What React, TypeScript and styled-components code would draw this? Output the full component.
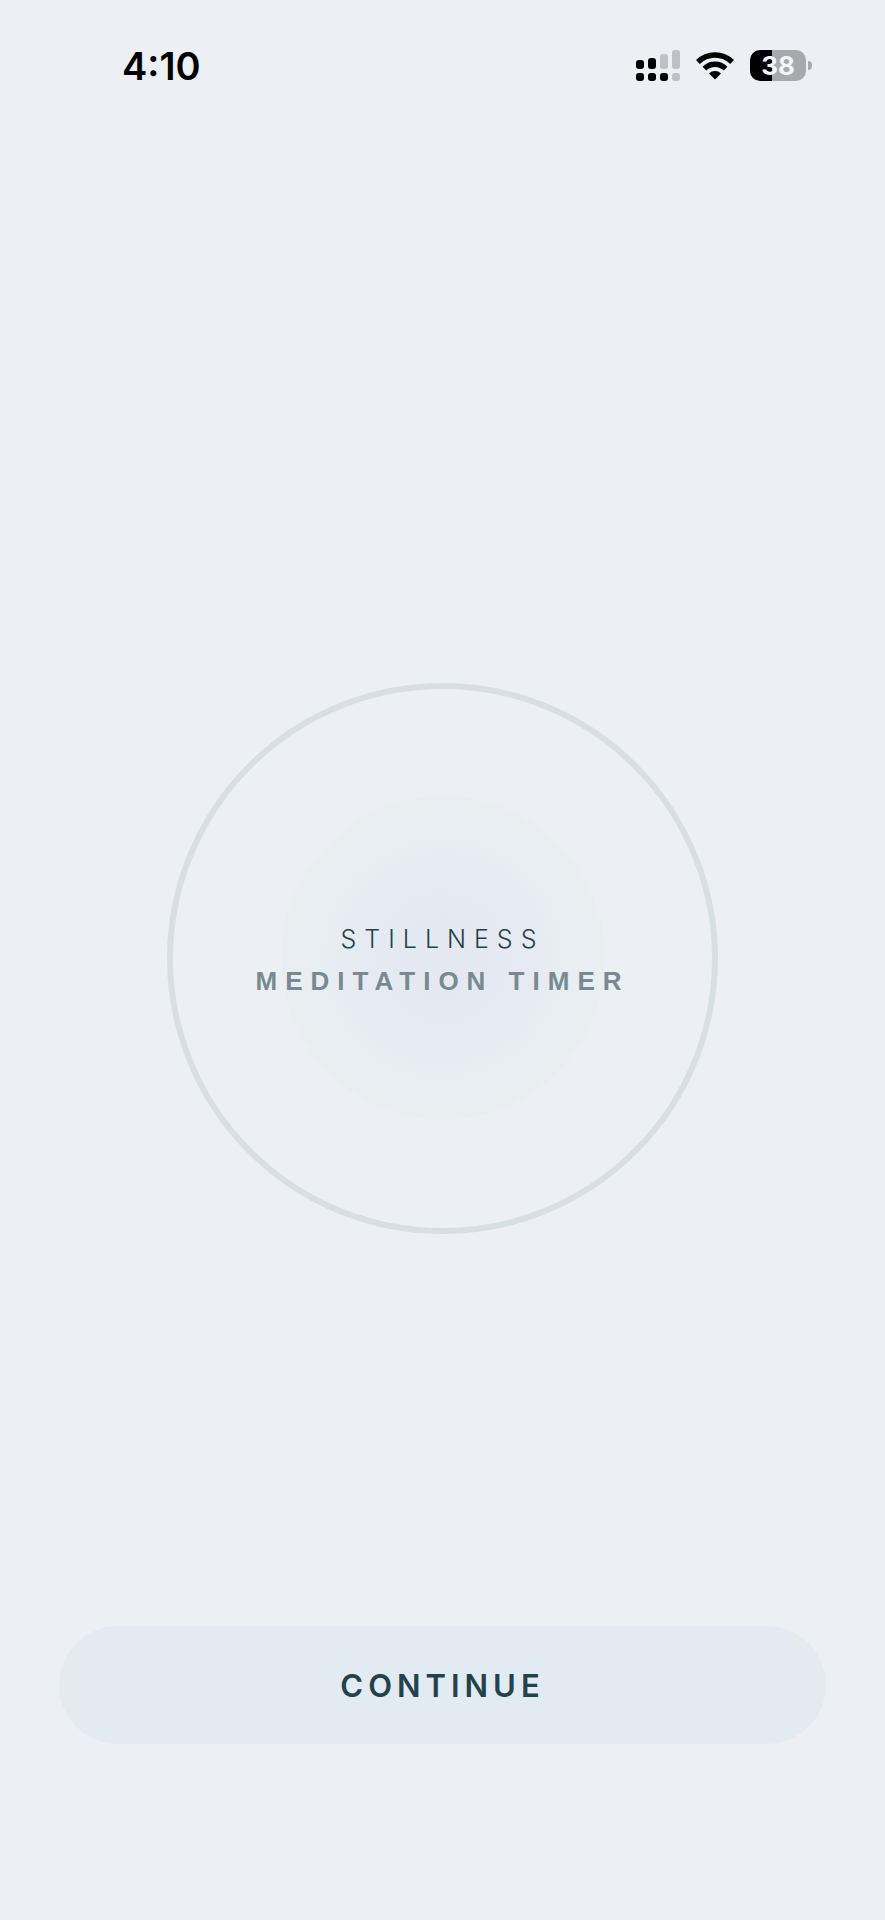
import React from "react";
import styled, { createGlobalStyle } from "styled-components";

const GlobalStyle = createGlobalStyle`
  body {
    margin: 0;
    background: #ecf0f5;
    font-family: Inter, "Liberation Sans", sans-serif;
  }
`;

const Screen = styled.div`
  display: flex;
  flex-direction: column;
  min-height: 100vh;
`;

const StatusBar = styled.header`
  display: flex;
  align-items: center;
  justify-content: space-between;
  height: 131px;
  padding: 0 73px 0 122px;
  color: #000;
`;

const Time = styled.time`
  font-size: 38px;
  line-height: 44px;
  font-weight: 600;
`;

const StatusIcons = styled.div`
  display: flex;
  align-items: center;
  gap: 16px;
`;

const Battery = styled.div`
  display: flex;
  align-items: center;
  gap: 2px;
`;

const BatteryBody = styled.div<{ $level: number }>`
  width: 56px;
  height: 31px;
  border-radius: 10px;
  background: linear-gradient(
    to right,
    #000 ${(p) => p.$level}%,
    #a5aaad ${(p) => p.$level}%
  );
  color: #f1f4f8;
  font-size: 26px;
  line-height: 31px;
  font-weight: 700;
  text-align: center;
`;

const BatteryTip = styled.div`
  width: 4px;
  height: 9px;
  border-radius: 0 4px 4px 0;
  background: #a5aaad;
`;

const Stage = styled.main`
  flex: 1;
  display: flex;
  align-items: center;
  justify-content: center;
  padding-top: 159px;
`;

const Ring = styled.div`
  display: grid;
  place-items: center;
  box-sizing: border-box;
  width: 551px;
  height: 551px;
  border: 6px solid #d8dfe3;
  border-radius: 50%;

  > * {
    grid-area: 1 / 1;
  }
`;

const Glow = styled.div`
  width: 324px;
  height: 324px;
  border-radius: 50%;
  background: radial-gradient(
    closest-side,
    #e3e8f1 0%,
    #e6eaf2 50%,
    #e7edf1 72%,
    #e9eef1 100%
  );
`;

const Titles = styled.div`
  padding-top: 4px;
  text-align: center;
  white-space: nowrap;
`;

const Title = styled.h1`
  margin: 0;
  color: #24424c;
  font-size: 25px;
  line-height: 42px;
  font-weight: 300;
  letter-spacing: 8px;
`;

const Subtitle = styled.p`
  margin: 0;
  color: #788992;
  font-family: "Liberation Sans", Arial, sans-serif;
  font-size: 26px;
  line-height: 42px;
  font-weight: 700;
  letter-spacing: 8px;
`;

const Footer = styled.footer`
  padding: 0 59px 176px;
`;

const ContinueButton = styled.button`
  display: block;
  width: 100%;
  height: 118px;
  padding: 0;
  border: 0;
  border-radius: 59px;
  background: linear-gradient(
    to right,
    #e4ebee 0%,
    #e3ebf2 5%,
    #e3ebf2 95%,
    #e4ebee 100%
  );
  color: #24424c;
  font-family: inherit;
  font-size: 31px;
  font-weight: 600;
  letter-spacing: 5px;
  cursor: pointer;
`;

const SignalIcon = () => (
  <svg width="44" height="31" viewBox="0 0 44 31" role="img" aria-label="Signal">
    <rect x="0" y="10" width="8" height="9" rx="3" />
    <rect x="12" y="8" width="8" height="11" rx="3" />
    <rect x="24" y="4" width="8" height="15" rx="3" fill="#bdc0c4" />
    <rect x="36" y="0" width="8" height="19" rx="3" fill="#bdc0c4" />
    <rect x="0" y="23" width="8" height="8" rx="3" />
    <rect x="12" y="23" width="8" height="8" rx="3" />
    <rect x="24" y="23" width="8" height="8" rx="3" />
    <rect x="36" y="23" width="8" height="8" rx="3" fill="#bdc0c4" />
  </svg>
);

const WifiIcon = () => (
  <svg width="38" height="28" viewBox="0 0 38 28" role="img" aria-label="Wi-Fi">
    <g fill="none" stroke="#000" strokeWidth="5.4">
      <path d="M1.9 10A24.3 24.3 0 0 1 36.1 10" />
      <path d="M8.4 16.7A15 15 0 0 1 29.6 16.7" />
    </g>
    <path d="M19 27.5L13 21.5A8.6 8.6 0 0 1 25 21.5Z" />
  </svg>
);

export default function App() {
  return (
    <>
      <GlobalStyle />
      <Screen>
        <StatusBar>
          <Time>4:10</Time>
          <StatusIcons>
            <SignalIcon />
            <WifiIcon />
            <Battery>
              <BatteryBody $level={39}>38</BatteryBody>
              <BatteryTip />
            </Battery>
          </StatusIcons>
        </StatusBar>
        <Stage>
          <Ring>
            <Glow />
            <Titles>
              <Title>STILLNESS</Title>
              <Subtitle>MEDITATION TIMER</Subtitle>
            </Titles>
          </Ring>
        </Stage>
        <Footer>
          <ContinueButton type="button">CONTINUE</ContinueButton>
        </Footer>
      </Screen>
    </>
  );
}
